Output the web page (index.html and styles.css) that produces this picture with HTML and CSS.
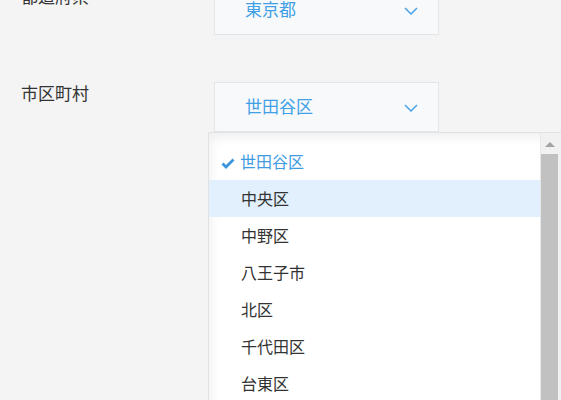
FILE: index.html
```html
<!DOCTYPE html>
<html lang="ja">
<head>
    <meta charset="UTF-8">
    <meta name="viewport" content="width=device-width, initial-scale=1.0">
    <title>住所</title>
    <link rel="stylesheet" href="styles.css">
</head>
<body>
    <div class="form">
        <div class="row">
            <label class="label">都道府県</label>
            <div class="select">
                <span class="value">東京都</span>
                <svg class="chevron" width="14" height="8" viewBox="0 0 14 8"><path d="M1 1 L7 7 L13 1" fill="none" stroke="#4aa3e8" stroke-width="1.5"/></svg>
            </div>
        </div>
        <div class="row">
            <label class="label">市区町村</label>
            <div class="select">
                <span class="value">世田谷区</span>
                <svg class="chevron" width="14" height="8" viewBox="0 0 14 8"><path d="M1 1 L7 7 L13 1" fill="none" stroke="#4aa3e8" stroke-width="1.5"/></svg>
                <div class="dropdown">
                    <ul class="options">
                        <li class="option selected">
                            <svg class="check" width="14" height="11" viewBox="0 0 14 11"><path d="M1.5 5.5 L5 9 L12.5 1.5" fill="none" stroke="#3a95dd" stroke-width="2.8"/></svg>世田谷区
                        </li>
                        <li class="option hover">中央区</li>
                        <li class="option">中野区</li>
                        <li class="option">八王子市</li>
                        <li class="option">北区</li>
                        <li class="option">千代田区</li>
                        <li class="option">台東区</li>
                    </ul>
                    <div class="scrollbar">
                        <span class="arrow"></span>
                        <span class="thumb"></span>
                    </div>
                </div>
            </div>
        </div>
    </div>
</body>
</html>
```

FILE: styles.css
```css
*{
    margin: 0;
    padding: 0;
    box-sizing: border-box;
}
html, body{
    height: 100%;
    overflow: hidden;
}
body{
    background-color: #f4f4f4;
    font-family: "Noto Sans CJK JP", "Noto Sans", sans-serif;
    color: #333;
}
.form{
    margin-top: -15px;
    padding-left: 21px;
    display: flex;
    flex-direction: column;
    gap: 47px;
}
.row{
    display: flex;
    align-items: flex-start;
}
.label{
    width: 193px;
    font-size: 17px;
    line-height: 21px;
}
.select{
    position: relative;
    width: 225px;
    height: 50px;
    padding: 0 20px 0 30px;
    background-color: #f7f9fb;
    border: 1px solid #e3e6e8;
    display: flex;
    align-items: center;
    justify-content: space-between;
}
.value{
    font-size: 17px;
    color: #409fe6;
    margin-top: -3px;
}
.chevron{
    display: block;
    margin-top: 2px;
}
.dropdown{
    position: absolute;
    top: calc(100% + 1px);
    left: -7px;
    width: 354px;
    height: 300px;
    background-color: #fff;
    border: 1px solid #e2e2e2;
    box-shadow: inset 5px 8px 12px -4px rgba(0, 0, 0, 0.07);
    display: flex;
}
.options{
    flex: 1;
    list-style: none;
    padding-top: 10px;
}
.option{
    height: 37px;
    line-height: 37px;
    padding-left: 32px;
    font-size: 16px;
    color: #333;
}
.option.selected{
    padding-left: 12px;
    color: #3f9be2;
    display: flex;
    align-items: center;
}
.check{
    margin: 3px 5px 0 0;
}
.option.hover{
    background-color: #e1f0fc;
}
.scrollbar{
    width: 21px;
    background-color: #f1f1f1;
    border-left: 1px solid #e8e8e8;
    display: flex;
    flex-direction: column;
    align-items: flex-start;
}
.arrow{
    margin: 9px 0 0 4px;
    width: 0;
    height: 0;
    border-left: 5px solid transparent;
    border-right: 5px solid transparent;
    border-bottom: 5px solid #a3a3a3;
}
.thumb{
    margin-top: 7px;
    width: 17px;
    flex: 1;
    background-color: #c1c1c1;
}
```
